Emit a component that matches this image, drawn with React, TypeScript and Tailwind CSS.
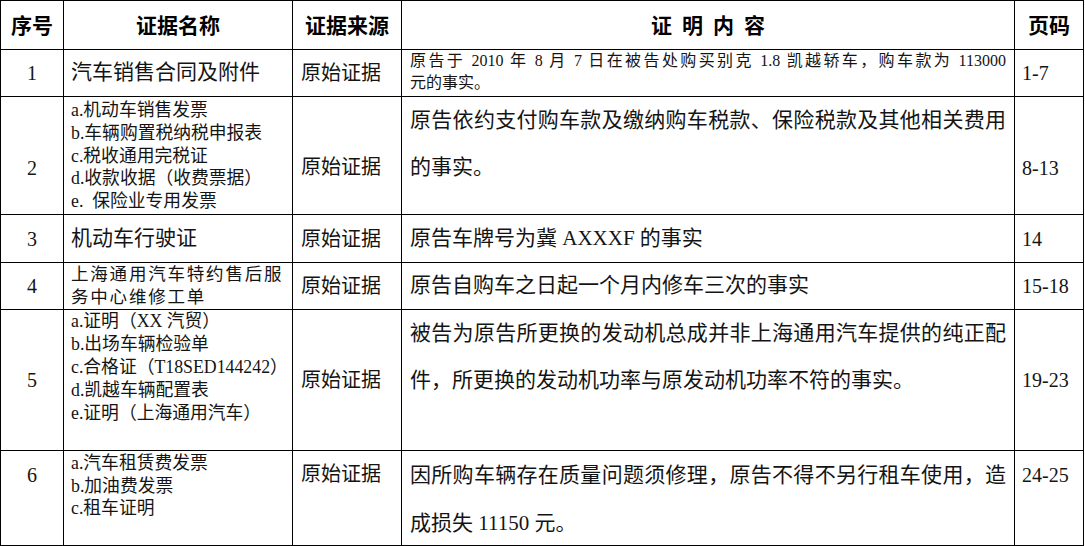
const body = "font-['Liberation_Serif','Noto_Sans_CJK_SC',serif] text-[#141414]";
const head =
  "flex items-center justify-center bg-white font-['Noto_Sans_CJK_SC',sans-serif] text-[21px] font-bold text-black";

function Lines({ items }: { items: string[] }) {
  return (
    <>
      {items.map((t) => (
        <div key={t} className="whitespace-pre">
          {t}
        </div>
      ))}
    </>
  );
}

// 整行两端对齐（Word 里的满行）
function FullLine({ children }: { children: React.ReactNode }) {
  return <div className="text-justify [text-align-last:justify]">{children}</div>;
}

export default function App() {
  return (
    <div className={`h-[546px] w-[1085px] bg-white ${body}`}>
      <div className="grid w-[1084px] grid-cols-[62px_228px_108px_612px_68px] grid-rows-[48px_46px_117px_47px_46px_140px_94px] gap-px border border-black bg-black">
        {/* 表头 */}
        <div className={head}>序号</div>
        <div className={head}>证据名称</div>
        <div className={head}>证据来源</div>
        <div className={head}>
          <span className="mr-[-10px] tracking-[10px]">证明内容</span>
        </div>
        <div className={head}>页码</div>

        {/* 1 */}
        <div className="flex items-center justify-center bg-white text-[20px]">1</div>
        <div className="flex items-center bg-white pl-[7px] text-[21px]">汽车销售合同及附件</div>
        <div className="flex items-center bg-white pl-[8px] text-[20px]">原始证据</div>
        <div className="bg-white px-[8px] text-[16px] leading-[21.5px]">
          <FullLine>原告于 2010 年 8 月 7 日在被告处购买别克 1.8 凯越轿车，购车款为 113000</FullLine>
          <div>元的事实。</div>
        </div>
        <div className="flex items-center bg-white pl-[7px] text-[20px]">1-7</div>

        {/* 2 */}
        <div className="bg-white pt-[59px] text-center text-[20px] leading-[24px]">2</div>
        <div className="bg-white pl-[7px] pt-[2px] text-[17.8px] leading-[22.75px]">
          <Lines
            items={[
              "a.机动车销售发票",
              "b.车辆购置税纳税申报表",
              "c.税收通用完税证",
              "d.收款收据（收费票据）",
              "e.  保险业专用发票",
            ]}
          />
        </div>
        <div className="bg-white pl-[8px] pt-[58px] text-[20px] leading-[24px]">原始证据</div>
        <div className="bg-white px-[8px] text-[21px] leading-[47px]">
          <FullLine>原告依约支付购车款及缴纳购车税款、保险税款及其他相关费用</FullLine>
          <div>的事实。</div>
        </div>
        <div className="bg-white pl-[7px] pt-[59px] text-[20px] leading-[24px]">8-13</div>

        {/* 3 */}
        <div className="flex items-center justify-center bg-white text-[20px]">3</div>
        <div className="flex items-center bg-white pl-[7px] text-[21px]">机动车行驶证</div>
        <div className="flex items-center bg-white pl-[8px] text-[20px]">原始证据</div>
        <div className="flex items-center bg-white px-[8px] text-[21px]">原告车牌号为冀 AXXXF 的事实</div>
        <div className="flex items-center bg-white pl-[7px] text-[20px]">14</div>

        {/* 4 */}
        <div className="flex items-center justify-center bg-white text-[20px]">4</div>
        <div className="bg-white pl-[7px] text-[17.5px] leading-[22.5px] tracking-[1.8px]">
          <div>上海通用汽车特约售后服</div>
          <div>务中心维修工单</div>
        </div>
        <div className="flex items-center bg-white pl-[8px] text-[20px]">原始证据</div>
        <div className="flex items-center bg-white px-[8px] text-[21px]">原告自购车之日起一个月内修车三次的事实</div>
        <div className="flex items-center bg-white pl-[7px] text-[20px]">15-18</div>

        {/* 5 */}
        <div className="flex items-center justify-center bg-white text-[20px]">5</div>
        <div className="bg-white pl-[7px] text-[17.8px] leading-[23px]">
          <Lines
            items={[
              "a.证明（XX 汽贸）",
              "b.出场车辆检验单",
              "c.合格证（T18SED144242）",
              "d.凯越车辆配置表",
              "e.证明（上海通用汽车）",
            ]}
          />
        </div>
        <div className="flex items-center bg-white pl-[8px] text-[20px]">原始证据</div>
        <div className="bg-white px-[8px] text-[21px] leading-[47px]">
          <FullLine>被告为原告所更换的发动机总成并非上海通用汽车提供的纯正配</FullLine>
          <div>件，所更换的发动机功率与原发动机功率不符的事实。</div>
        </div>
        <div className="flex items-center bg-white pl-[7px] text-[20px]">19-23</div>

        {/* 6 */}
        <div className="bg-white pt-[12px] text-center text-[20px] leading-[24px]">6</div>
        <div className="bg-white pl-[7px] pt-[1px] text-[17.8px] leading-[22.5px]">
          <Lines items={["a.汽车租赁费发票", "b.加油费发票", "c.租车证明"]} />
        </div>
        <div className="bg-white pl-[8px] pt-[11px] text-[20px] leading-[24px]">原始证据</div>
        <div className="bg-white px-[8px] text-[21px] leading-[48px]">
          <FullLine>因所购车辆存在质量问题须修理，原告不得不另行租车使用，造</FullLine>
          <div>成损失 11150 元。</div>
        </div>
        <div className="bg-white pl-[7px] pt-[12px] text-[20px] leading-[24px]">24-25</div>
      </div>
    </div>
  );
}
